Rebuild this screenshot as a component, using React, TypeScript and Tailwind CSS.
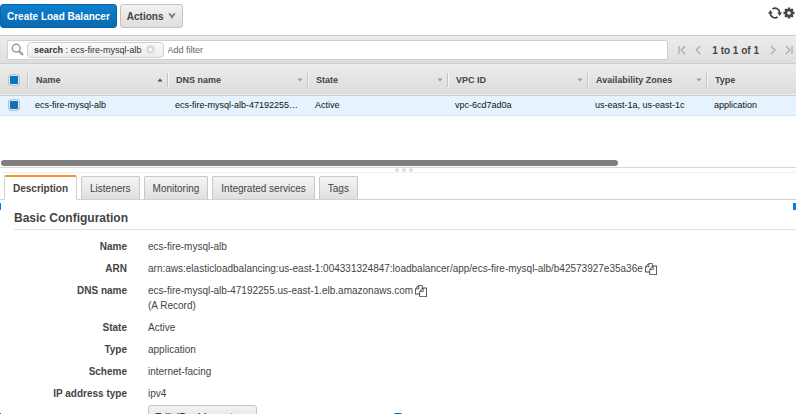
import type { ReactNode } from "react";

const columns = [
  { name: "Name", value: "ecs-fire-mysql-alb", sort: "asc" },
  { name: "DNS name", value: "ecs-fire-mysql-alb-47192255…", sort: "none" },
  { name: "State", value: "Active", sort: "none" },
  { name: "VPC ID", value: "vpc-6cd7ad0a", sort: "none" },
  { name: "Availability Zones", value: "us-east-1a, us-east-1c", sort: "none" },
  { name: "Type", value: "application", sort: "" },
];

const tabs = ["Description", "Listeners", "Monitoring", "Integrated services", "Tags"];

function Chevron() {
  return (
    <svg viewBox="0 0 8 6" className="h-1.5 w-2" aria-hidden="true">
      <path d="M0.3 0.3H2.2L4 2.4L5.8 0.3H7.7L4 5.7Z" fill="#777" />
    </svg>
  );
}

function SortArrow({ dir }: { dir: string }) {
  return (
    <svg viewBox="0 0 6 4" className="h-1 w-1.5" aria-hidden="true">
      {dir === "asc" ? <path d="M0.5 3.5H5.5L3 0.5Z" fill="#444" /> : <path d="M0.5 0.5H5.5L3 3.5Z" fill="#999" />}
    </svg>
  );
}

function CopyButton({ label }: { label: string }) {
  return (
    <button type="button" aria-label={label} className="ml-[2px] block">
      <svg viewBox="0 0 1792 1792" className="block h-3 w-3" fill="#444">
        <path d="M1696 384q40 0 68 28t28 68v1216q0 40-28 68t-68 28h-960q-40 0-68-28t-28-68v-288h-544q-40 0-68-28t-28-68v-672q0-40 20-88t48-76l408-408q28-28 76-48t88-20h416q40 0 68 28t28 68v328q68-40 128-40h416zm-544 213l-299 299h299v-299zm-640-384l-299 299h299v-299zm196 647l316-316v-416h-384v416q0 40-28 68t-68 28h-416v640h512v-256q0-40 20-88t48-76zm956 804v-1152h-384v416q0 40-28 68t-68 28h-416v640h896z" />
      </svg>
    </button>
  );
}

function PageButton({ label, d }: { label: string; d: string }) {
  return (
    <button type="button" aria-label={label} className="block">
      <svg viewBox="0 0 8 10" className="h-2.5 w-2" fill="none" stroke="#b0b0b0" strokeWidth="1.4">
        <path d={d} />
      </svg>
    </button>
  );
}

function Check({ label }: { label: string }) {
  return (
    <input
      type="checkbox"
      defaultChecked
      aria-label={label}
      className="ml-2 block size-3 appearance-none rounded-[3px] border border-[#c2c2c2] bg-white bg-clip-padding checked:bg-[#0b73bd] checked:shadow-[inset_0_0_0_1px_#dbe9f4]"
    />
  );
}

function Detail({ term, children }: { term: string; children: ReactNode }) {
  return (
    <div className="flex">
      <dt className="w-[127px] shrink-0 text-right font-bold">{term}</dt>
      <dd className="ml-[21px] min-w-0">{children}</dd>
    </div>
  );
}

export default function App() {
  return (
    <div className="relative flex h-screen flex-col overflow-hidden bg-white font-['Liberation_Sans',Arial,sans-serif] text-[10px] leading-[15px] text-[#444]">
      <header className="flex h-[35px] shrink-0 items-start gap-[3px] pt-1">
        <button
          type="button"
          className="h-6 rounded-[3px] border border-[#0a65a8] bg-linear-to-b from-[#0c80cf] to-[#0969b0] px-[6px] font-bold text-white"
        >
          Create Load Balancer
        </button>
        <button
          type="button"
          className="flex h-6 items-center gap-1 rounded-[3px] border border-[#c4c4c4] bg-linear-to-b from-[#f2f2f2] to-[#dedede] px-[6px] font-bold"
        >
          Actions
          <Chevron />
        </button>
        <div className="ml-auto flex items-center gap-px pt-0.5 pr-px">
          <button type="button" aria-label="Refresh">
            <svg viewBox="0 0 14 14" className="block size-3.5" fill="none">
              <path d="M4.4 2.9A4.9 4.9 0 0 1 11.8 7" stroke="#444" strokeWidth="1.8" />
              <path d="M9.6 11.1A4.9 4.9 0 0 1 2.2 7" stroke="#444" strokeWidth="1.8" />
              <path d="M9.2 6.6H14L11.6 10Z" fill="#444" />
              <path d="M0 7.4H4.8L2.4 4Z" fill="#444" />
            </svg>
          </button>
          <button type="button" aria-label="Settings">
            <svg viewBox="0 0 12 12" className="block size-3" fill="none" stroke="#444">
              <circle cx="6" cy="6" r="3" strokeWidth="2.4" />
              <path
                d="M6 .5V2.5M6 9.5V11.5M.5 6H2.5M9.5 6H11.5M2.1 2.1L3.5 3.5M8.5 8.5L9.9 9.9M9.9 2.1L8.5 3.5M3.5 8.5L2.1 9.9"
                strokeWidth="2.4"
              />
            </svg>
          </button>
        </div>
      </header>

      <section className="flex h-[29px] shrink-0 items-center border-y border-[#cdcdcd] bg-linear-to-b from-[#ececec] to-[#dedede] pr-[3px] pl-[7px]">
        <div className="flex h-5 flex-1 items-center rounded-[2px] border border-[#cfcfcf] bg-white pl-[3px] text-[9px]">
          <svg viewBox="0 0 13 13" className="size-[13px]" fill="none" stroke="#999" aria-hidden="true">
            <circle cx="5.2" cy="5.2" r="3.9" strokeWidth="1.5" />
            <path d="M8.2 8.2L12 12" strokeWidth="2.2" />
          </svg>
          <span className="ml-[3px] flex h-4 items-center rounded-[4px] border border-[#cfcfcf] bg-linear-to-b from-[#fafafa] to-[#ececec] pr-[8px] pl-[6px] text-[#333]">
            <span className="pt-px">
              <b>search</b> : ecs-fire-mysql-alb
            </span>
            <button type="button" aria-label="Remove filter" className="ml-1">
              <svg viewBox="0 0 9 9" className="block size-[9px]">
                <circle cx="4.5" cy="4.5" r="4.2" fill="#d9d9d9" />
                <path d="M3 3L6 6M6 3L3 6" stroke="#fff" strokeWidth="1.2" />
              </svg>
            </button>
          </span>
          <input
            type="text"
            aria-label="Add filter"
            placeholder="Add filter"
            className="ml-1 min-w-0 flex-1 bg-transparent pt-px outline-none placeholder:text-[#666]"
          />
        </div>
        <nav aria-label="Pages" className="ml-[10px] flex items-center">
          <PageButton label="First page" d="M1 1V9M7.2 1L3.2 5L7.2 9" />
          <span className="ml-2">
            <PageButton label="Previous page" d="M6.2 1L2.2 5L6.2 9" />
          </span>
          <b className="mx-[10px] pt-px">1 to 1 of 1</b>
          <PageButton label="Next page" d="M2 1L6 5L2 9" />
          <span className="ml-2">
            <PageButton label="Last page" d="M0.8 1L4.8 5L0.8 9M7 1V9" />
          </span>
        </nav>
      </section>

      <div className="h-24 shrink-0">
        <table className="w-full table-fixed border-collapse text-left text-[9px]">
          <colgroup>
            <col className="w-[27px]" />
            <col className="w-[140px]" />
            <col className="w-[140px]" />
            <col className="w-[140px]" />
            <col className="w-[140px]" />
            <col className="w-[119px]" />
            <col />
          </colgroup>
          <thead>
            <tr className="h-[31px] border-b border-[#cdcdcd] bg-linear-to-b from-[#ececec] to-[#dcdcdc]">
              <th className="p-0 pt-0.5">
                <Check label="Select all" />
              </th>
              {columns.map((c) => (
                <th key={c.name} className="p-0 pt-0.5">
                  <div className="flex h-3.5 items-center justify-between border-l border-[#c4c4c4] pr-1 pl-2 shadow-[inset_1px_0_0_#f8f8f8]">
                    {c.name}
                    {c.sort && <SortArrow dir={c.sort} />}
                  </div>
                </th>
              ))}
            </tr>
          </thead>
          <tbody>
            <tr className="h-5 border-b border-[#dde3e8] bg-[#e6f2fd] text-[#111]">
              <td className="p-0">
                <Check label="Select ecs-fire-mysql-alb" />
              </td>
              {columns.map((c) => (
                <td key={c.name} className="truncate py-0 pr-0 pl-2">
                  {c.value}
                </td>
              ))}
            </tr>
          </tbody>
        </table>
      </div>
      <div className="shrink-0 border-b border-[#d6d6d6] pb-px pl-px">
        <div className="h-1.5 w-[77.6%] rounded-full bg-[#7f7f7f]" />
      </div>
      <div className="flex h-[5px] shrink-0 items-end justify-center gap-[3px] border-b border-[#f0f0f0] pl-3">
        <i className="size-1 rounded-full border border-[#d6d6d6] bg-[#eee]" />
        <i className="size-1 rounded-full border border-[#d6d6d6] bg-[#eee]" />
        <i className="size-1 rounded-full border border-[#d6d6d6] bg-[#eee]" />
      </div>

      <div role="tablist" className="flex h-[27px] shrink-0 items-end gap-1 border-b border-[#d0d0d0] pl-1">
        {tabs.map((t, i) => (
          <button
            key={t}
            type="button"
            role="tab"
            aria-selected={i === 0}
            className={
              i === 0
                ? "-mb-px h-[25px] rounded-t-[2px] border border-t-2 border-[#d0d0d0] border-t-[#f7942e] border-b-white bg-white px-2 font-bold"
                : "h-[23px] rounded-t-[2px] border border-b-0 border-[#c8c8c8] bg-linear-to-b from-[#f4f4f4] to-[#dfdfdf] px-2"
            }
          >
            {t}
          </button>
        ))}
      </div>

      <main className="shrink-0 pt-[10px]">
        <h2 className="ml-[14px] border-b border-[#e0e0e0] pb-0.5 text-[12px] leading-[17px] font-bold">
          Basic Configuration
        </h2>
        <dl className="mt-[9px] flex flex-col gap-[7px]">
          <Detail term="Name">ecs-fire-mysql-alb</Detail>
          <Detail term="ARN">
            <span className="flex items-center">
              arn:aws:elasticloadbalancing:us-east-1:004331324847:loadbalancer/app/ecs-fire-mysql-alb/b42573927e35a36e
              <CopyButton label="Copy ARN" />
            </span>
          </Detail>
          <Detail term="DNS name">
            <span className="flex items-center">
              ecs-fire-mysql-alb-47192255.us-east-1.elb.amazonaws.com
              <CopyButton label="Copy DNS name" />
            </span>
            (A Record)
          </Detail>
          <Detail term="State">Active</Detail>
          <Detail term="Type">application</Detail>
          <Detail term="Scheme">internet-facing</Detail>
          <Detail term="IP address type">ipv4</Detail>
        </dl>
        <button
          type="button"
          className="mt-1 ml-[148px] flex h-6 items-center rounded-[3px] border border-[#c4c4c4] bg-linear-to-b from-[#f2f2f2] to-[#dedede] px-[6px] font-bold"
        >
          Edit IP address type
        </button>
      </main>

      <i className="absolute top-[203px] left-0 h-[7px] w-px bg-[#0a7be0]" />
      <i className="absolute top-[203px] right-0 h-[7px] w-[3px] bg-[#0a7be0]" />
      <i className="absolute bottom-0 left-0 h-px w-px bg-[#0a6cc0]" />
      <i className="absolute bottom-0 left-1/2 h-px w-[7px] -translate-x-1/2 bg-[#0a6cc0]" />
    </div>
  );
}
